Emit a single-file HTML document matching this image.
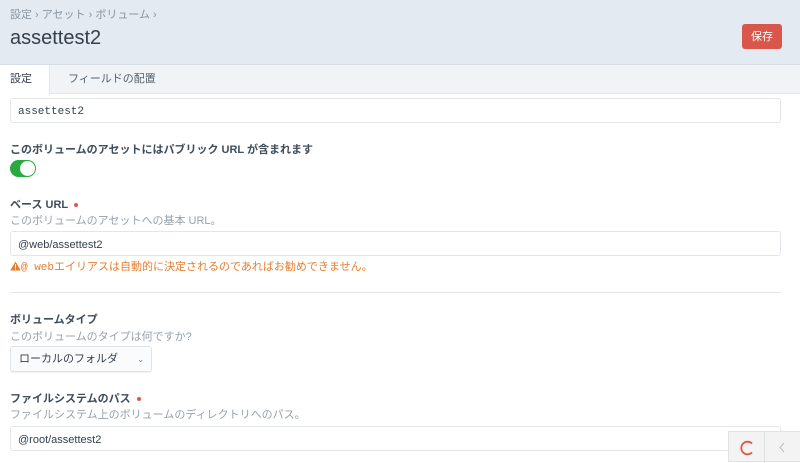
<!DOCTYPE html>
<html><head><meta charset="utf-8"><style>
*{box-sizing:border-box;margin:0;padding:0}
body{width:800px;height:462px;overflow:hidden;background:#fff;font-family:"Liberation Sans","Noto Sans CJK JP",sans-serif;color:#3f4d5a;position:relative}
.hdr{position:absolute;left:0;top:0;width:800px;height:65px;background:#e4eaf1;border-bottom:1px solid #d8dee6}
.bc{position:absolute;left:10px;top:6px;font-size:11px;color:#8a96a3}
h1{position:absolute;left:10px;top:27px;font-size:20px;font-weight:normal;color:#33404c}
.save{position:absolute;left:742px;top:24px;width:40px;height:25px;background:#d9574a;border-radius:3px;color:#fff;font-size:11px;text-align:center;line-height:26px}
.tabs{position:absolute;left:0;top:65px;width:800px;height:29px;background:#f1f4f7;border-bottom:1px solid #e3e7ec}
.tab{position:absolute;top:0;height:29px;line-height:28px;font-size:11px}
.t1{left:0;width:50px;background:#fff;padding-left:10px;color:#33404c;height:30px;border-right:1px solid #e3e7ec}
.t2{left:68px;color:#55626e}
.inp{position:absolute;left:10px;width:771px;height:25px;border:1px solid #e3e6ea;border-radius:3px;font-size:11px;line-height:26px;padding-left:7px;color:#33404c}
.mono{font-family:"Liberation Mono","Noto Sans CJK JP",monospace}
.lbl{position:absolute;left:10px;font-size:11px;font-weight:bold;color:#3f4d5a}
.lbl i{display:inline-block;width:4px;height:4px;border-radius:2px;background:#e0584c;margin-left:6px;vertical-align:middle}
.help{position:absolute;left:10px;font-size:11px;color:#97a1ac}
.tog{position:absolute;left:10px;top:160px;width:26px;height:17px;border-radius:9px;background:#27ab3e}
.tog:after{content:"";position:absolute;right:1px;top:1px;width:15px;height:15px;border-radius:8px;background:#fff}
.warn{position:absolute;left:10px;top:258px;font-size:11px;color:#e67e30}
.hr{position:absolute;left:10px;top:292px;width:771px;height:1px;background:#e3e6ea}
.sel{position:absolute;left:10px;top:346px;width:142px;height:26px;border:1px solid #dfe3e8;border-radius:3px;background:#fafbfc;box-shadow:0 1px 1px rgba(0,0,0,.06);font-size:11px;line-height:25px;padding-left:8px;color:#33404c}
.sel span{position:absolute;right:7px;top:0;font-size:8px;color:#777}
.wid{position:absolute;left:728px;top:431px;width:72px;height:31px;background:#f3f3f3;border:1px solid #e2e2e2;border-right:none}
.wid .d{position:absolute;left:35px;top:0;width:1px;height:31px;background:#e0e0e0}
</style></head><body>
<div class="hdr">
<div class="bc">設定 › アセット › ボリューム ›</div>
<h1>assettest2</h1>
<div class="save">保存</div>
</div>
<div class="tabs"><div class="tab t1">設定</div><div class="tab t2">フィールドの配置</div></div>
<div class="inp mono" style="top:98px">assettest2</div>
<div class="lbl" style="top:141px">このボリュームのアセットにはパブリック URL が含まれます</div>
<div class="tog"></div>
<div class="lbl" style="top:196px">ベース URL<i></i></div>
<div class="help" style="top:212px">このボリュームのアセットへの基本 URL。</div>
<div class="inp" style="top:231px">@web/assettest2</div>
<div class="warn"><svg width="11" height="10" viewBox="0 0 11 10" style="vertical-align:-1px"><path d="M5.5 0.5L10.7 9.5H0.3Z" fill="#e67e30"/><rect x="5" y="3.3" width="1" height="3.5" fill="#fff"/><rect x="5" y="7.5" width="1" height="1" fill="#fff"/></svg><span class="mono">@ web</span>エイリアスは自動的に決定されるのであればお勧めできません。</div>
<div class="hr"></div>
<div class="lbl" style="top:311px">ボリュームタイプ</div>
<div class="help" style="top:328px">このボリュームのタイプは何ですか?</div>
<div class="sel">ローカルのフォルダ<span>⌄</span></div>
<div class="lbl" style="top:390px">ファイルシステムのパス<i></i></div>
<div class="help" style="top:406px">ファイルシステム上のボリュームのディレクトリへのパス。</div>
<div class="inp" style="top:426px">@root/assettest2</div>
<div class="wid"><svg style="position:absolute;left:9px;top:7px" width="18" height="18" viewBox="0 0 18 18"><path d="M14 4.5A6.3 6.3 0 1 0 14 13.5" fill="none" stroke="#e0584c" stroke-width="1.8"/></svg><div class="d"></div><svg style="position:absolute;left:49px;top:10px" width="8" height="11" viewBox="0 0 8 11"><path d="M6 1L2 5.5L6 10" fill="none" stroke="#bbb" stroke-width="1"/></svg></div>
</body></html>
